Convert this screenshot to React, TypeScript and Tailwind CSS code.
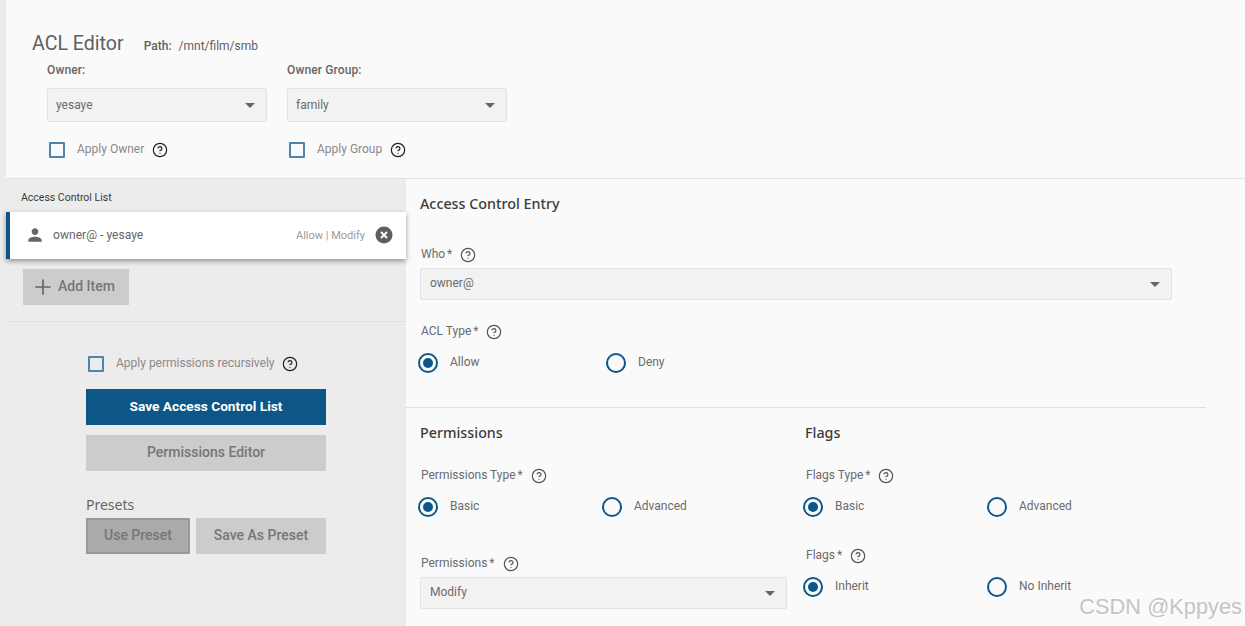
import { CircleHelp, Plus } from "lucide-react";
import React from "react";

const Help = ({ className = "text-[#222]" }: { className?: string }) => (
  <CircleHelp size={16} strokeWidth={1.8} className={className} />
);

const Caret = () => (
  <svg width="10" height="5" viewBox="0 0 10 5" className="mr-[1px] shrink-0">
    <path d="M0 0h10L5 5z" fill="#666" />
  </svg>
);

const Select = ({ value, className }: { value: string; className: string }) => (
  <div
    className={`flex items-center justify-between rounded-[2px] border border-[#e2e2e2] bg-[#f2f2f2] pr-[10px] text-[12px] text-[#6b6b6b] ${className}`}
  >
    <span>{value}</span>
    <Caret />
  </div>
);

const Checkbox = ({ label, labelClass }: { label: string; labelClass: string }) => (
  <div className="flex h-[16px] items-center">
    <div className="h-[16px] w-[16px] rounded-[1px] border-2 border-[#4d85aa]" />
    <span className={`text-[12px] text-[#8a8a8a] ${labelClass}`}>{label}</span>
  </div>
);

const Radio = ({ checked, label }: { checked?: boolean; label: string }) => (
  <div className="flex items-center">
    <div className="flex h-[20px] w-[20px] shrink-0 items-center justify-center rounded-full border-2 border-[#0d5688]">
      {checked && <div className="h-[10px] w-[10px] rounded-full bg-[#0d5688]" />}
    </div>
    <span className="ml-[12px] -mt-[2px] text-[12px] text-[#6b6b6b]">{label}</span>
  </div>
);

const FieldLabel = ({ text, className = "" }: { text: string; className?: string }) => (
  <div className={`flex h-[16px] items-center pl-[1px] text-[12px] text-[#6b6b6b] ${className}`}>
    <span>{text}</span>
    <span className="ml-[2px]">*</span>
    <span className="ml-[8px] mt-[2px]">
      <Help className="text-[#555]" />
    </span>
  </div>
);

const Heading = ({ text }: { text: string }) => (
  <h3 className="text-[14.3px] leading-[18px] font-medium text-[#3c3c3c] [font-family:'Noto_Sans',sans-serif]">
    {text}
  </h3>
);

const GreyButton = ({ text, className }: { text: string; className: string }) => (
  <button className={`flex h-[36px] items-center justify-center pb-[2px] text-[14px] font-medium text-[#767676] ${className}`}>
    {text}
  </button>
);

export default function App() {
  return (
    <div className="relative flex h-[626px] w-[1245px] overflow-hidden bg-[#fafafa] [font-family:Roboto,sans-serif]">
      <div className="w-[6px] shrink-0 bg-[#ececec]" />
      <div className="flex min-w-0 flex-1 flex-col">
        {/* top section */}
        <header className="h-[179px] shrink-0 border-b border-[#e2e2e2]">
          <div className="flex items-baseline pl-[26px] pt-[32px]">
            <h1 className="text-[19.6px] leading-[24px] text-[#5f5f5f]">ACL Editor</h1>
            <span className="ml-[20px] text-[12px] font-medium text-[#5f5f5f]">Path:</span>
            <span className="ml-[7px] text-[12px] text-[#5f5f5f]">/mnt/film/smb</span>
          </div>
          <div className="mt-[6px] flex gap-[20px] pl-[41px]">
            <div className="w-[220px]">
              <div className="h-[16px] text-[12px] leading-[16px] font-medium tracking-[0.01em] text-[#666]">Owner:</div>
              <Select value="yesaye" className="mt-[10px] h-[34px] pl-[8px]" />
              <div className="mt-[20px] flex items-center pl-[2px]">
                <Checkbox label="Apply Owner" labelClass="ml-[12px] -mt-[2px]" />
                <span className="ml-[8px]"><Help /></span>
              </div>
            </div>
            <div className="w-[220px]">
              <div className="h-[16px] text-[12px] leading-[16px] font-medium tracking-[0.01em] text-[#666]">Owner Group:</div>
              <Select value="family" className="mt-[10px] h-[34px] pl-[8px]" />
              <div className="mt-[20px] flex items-center pl-[2px]">
                <Checkbox label="Apply Group" labelClass="ml-[12px] -mt-[2px]" />
                <span className="ml-[8px]"><Help /></span>
              </div>
            </div>
          </div>
        </header>

        <div className="flex min-h-0 flex-1">
          {/* left list panel */}
          <aside className="w-[400px] shrink-0 bg-[#ececec]">
            <div className="h-[33px] pl-[15px] pt-[12px] text-[10.5px] leading-[14px] text-[#3a3a3a]">
              Access Control List
            </div>
            <div className="flex h-[47px] items-center border-l-4 border-[#0d5688] bg-white pl-[15px] pr-[13px] shadow-[0_2px_5px_rgba(0,0,0,0.4)]">
              <svg width="20" height="20" viewBox="0 0 24 24" className="-mt-[1px] shrink-0">
                <path
                  fill="#666"
                  d="M12 12c2.21 0 4-1.79 4-4s-1.79-4-4-4-4 1.79-4 4 1.79 4 4 4zm0 2c-2.67 0-8 1.34-8 4v2h16v-2c0-2.66-5.33-4-8-4z"
                />
              </svg>
              <span className="ml-[8px] text-[12.1px] text-[#666]">owner@ - yesaye</span>
              <span className="ml-auto mt-[1px] text-[11px] text-[#999]">Allow | Modify</span>
              <svg width="18" height="18" viewBox="0 0 18 18" className="ml-[10px] -mt-[1px] shrink-0">
                <circle cx="9" cy="9" r="8.5" fill="#5f5f5f" />
                <path d="M6 6l6 6M12 6l-6 6" stroke="#fff" strokeWidth="2" />
              </svg>
            </div>
            <div className="pl-[17px] pt-[10px]">
              <button className="flex h-[36px] w-[106px] items-center bg-[#cccccc] pb-[2px] pl-[8px] text-[14px] font-medium text-[#767676]">
                <Plus size={24} strokeWidth={1.7} className="mt-[2px] text-[#666]" />
                <span className="ml-[3px]">Add Item</span>
              </button>
            </div>
            <div className="mt-[16px] border-t border-[#e0e0e0] pl-[80px] pt-[34px]">
              <div className="flex items-center pl-[2px]">
                <Checkbox label="Apply permissions recursively" labelClass="ml-[12px] -mt-[2px]" />
                <span className="ml-[7px]"><Help /></span>
              </div>
              <button className="mt-[17px] flex h-[36px] w-[240px] items-center justify-center bg-[#0d5688] pb-[2px] text-[13.7px] font-bold text-white">
                Save Access Control List
              </button>
              <GreyButton text="Permissions Editor" className="mt-[10px] w-[240px] bg-[#cccccc]" />
              <div className="mt-[25px] text-[14px] leading-[18px] text-[#666] [font-family:'Noto_Sans',sans-serif]">
                Presets
              </div>
              <div className="mt-[4px] flex w-[240px] gap-[6px]">
                <GreyButton text="Use Preset" className="w-[104px] border-2 border-[#999] bg-[#aaaaaa]" />
                <GreyButton text="Save As Preset" className="w-[130px] bg-[#cccccc]" />
              </div>
            </div>
          </aside>

          {/* right entry panel */}
          <main className="min-w-0 flex-1">
            <div className="w-[800px]">
              <div className="h-[229px] border-b border-[#e0e0e0] pl-[14px] pt-[16px]">
                <Heading text="Access Control Entry" />
                <FieldLabel text="Who" className="mt-[33px]" />
                <Select value="owner@" className="mt-[6px] h-[32px] w-[752px] pl-[9px] [&>span]:-mt-[2px]" />
                <FieldLabel text="ACL Type" className="mt-[23px]" />
                <div className="mt-[14px] flex -ml-[2px]">
                  <div className="w-[188px]"><Radio checked label="Allow" /></div>
                  <Radio label="Deny" />
                </div>
              </div>
              <div className="flex pl-[14px] pt-[16px]">
                <section className="w-[385px]">
                  <Heading text="Permissions" />
                  <FieldLabel text="Permissions Type" className="mt-[25px]" />
                  <div className="mt-[14px] flex -ml-[2px]">
                    <div className="w-[184px]"><Radio checked label="Basic" /></div>
                    <Radio label="Advanced" />
                  </div>
                  <FieldLabel text="Permissions" className="mt-[38px]" />
                  <Select value="Modify" className="mt-[6px] h-[32px] w-[367px] pl-[9px] [&>span]:-mt-[2px]" />
                </section>
                <section>
                  <Heading text="Flags" />
                  <FieldLabel text="Flags Type" className="mt-[25px]" />
                  <div className="mt-[14px] flex -ml-[2px]">
                    <div className="w-[184px]"><Radio checked label="Basic" /></div>
                    <Radio label="Advanced" />
                  </div>
                  <FieldLabel text="Flags" className="mt-[30px]" />
                  <div className="mt-[14px] flex -ml-[2px]">
                    <div className="w-[184px]"><Radio checked label="Inherit" /></div>
                    <Radio label="No Inherit" />
                  </div>
                </section>
              </div>
            </div>
          </main>
        </div>
      </div>

      {/* watermark over the page */}
      <div className="absolute bottom-[6px] right-[3px] text-[21.8px] leading-[26px] text-[#c4c4c4] [font-family:'Liberation_Sans',sans-serif] [text-shadow:1px_1px_0_#fff]">
        CSDN @Kppyes
      </div>
    </div>
  );
}
